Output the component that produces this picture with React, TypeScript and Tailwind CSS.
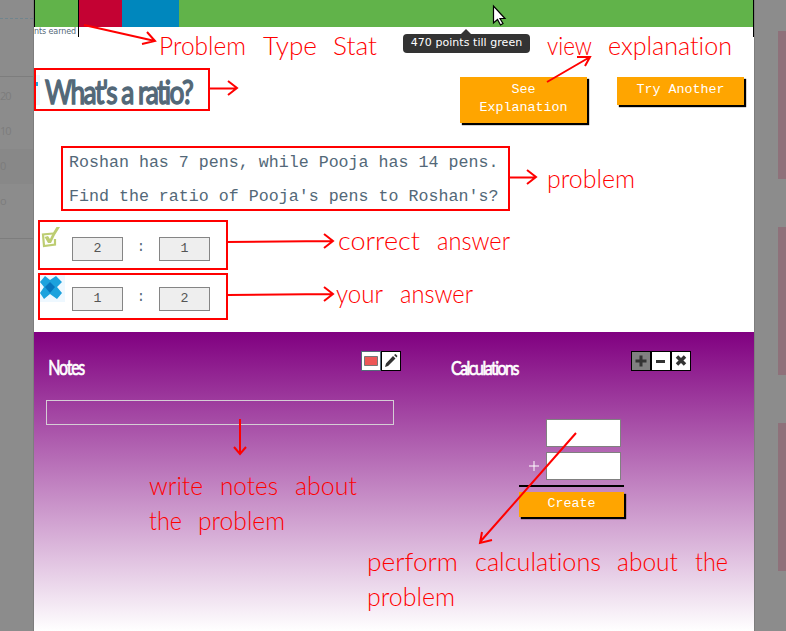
import React from "react";

type Word = [text: string, x: number, width: number];

const notes: { y: number; words: Word[] }[] = [
  { y: 55, words: [["Problem", 159, 87], ["Type", 263, 54], ["Stat", 333, 44]] },
  { y: 55, words: [["view", 547, 45], ["explanation", 608, 124]] },
  { y: 188, words: [["problem", 547, 88]] },
  { y: 250, words: [["correct", 338, 82], ["answer", 437, 73]] },
  { y: 303, words: [["your", 336, 47], ["answer", 400, 73]] },
  { y: 495, words: [["write", 149, 54], ["notes", 220, 58], ["about", 295, 62]] },
  { y: 530, words: [["the", 149, 33], ["problem", 198, 87]] },
  { y: 571, words: [["perform", 367, 91], ["calculations", 475, 126], ["about", 617, 61], ["the", 695, 33]] },
  { y: 606, words: [["problem", 367, 88]] },
];

const arrows = [
  "M84 25 L155 41 M147 32 L155 41 L142 44",
  "M210 88.500 H236 M228 81 L237 88 L228 95",
  "M547 82 L590 57 M577 57 H590 L585 66",
  "M510 177.500 H535 M527 170 L536 177 L527 184",
  "M226 242 L332 241 M324 234 L333 241 L324 248",
  "M228 295 L332 294 M324 287 L333 294 L324 301",
  "M240 419 V454 M234 447 L240 454 L246 447",
  "M576 433 L480 542 M482 532 L480 543 L492 540",
];

function Annotations() {
  return (
    <svg className="pointer-events-none absolute inset-0 [font-variant-ligatures:none]" width="786" height="631" fill="none">
      {arrows.map((d) => (
        <path key={d} d={d} stroke="#ff0000" strokeWidth="2" />
      ))}
      {notes.map(({ y, words }) => (
        <text key={`${words[0][0]}-${y}`} y={y} fill="#ff0000" fontSize="25" fontWeight="300" fontFamily="Lato, 'Open Sans', sans-serif">
          {words.map(([text, x, width]) => (
            <tspan key={text} x={x} textLength={width} lengthAdjust="spacingAndGlyphs">
              {text}
            </tspan>
          ))}
        </text>
      ))}
      <path d="M493.500 6 V23 L497.500 19.500 L500.500 25 L503 23.500 L500 18.500 H505 Z" fill="#fff" stroke="#000" strokeWidth="1.200" />
    </svg>
  );
}

function Answer({ left, right }: { left: string; right: string }) {
  const field =
    "flex h-6 w-[51px] items-center justify-center border border-[#858585] bg-[#eee] text-[13.300px] text-[#555]";
  return (
    <div className="flex font-['Liberation_Mono',monospace]">
      <div className={field}>{left}</div>
      <div className="w-9 pt-0.5 text-center text-[14px] leading-4 text-[#536878]">:</div>
      <div className={field}>{right}</div>
    </div>
  );
}

function CheckIcon() {
  return (
    <svg width="21" height="22" viewBox="0 0 21 22" fill="none" className="shrink-0">
      <path d="M12 6.500 L2 7.500 L3 19 L14 17.500 V12" stroke="#bdcd72" strokeWidth="2.200" />
      <path d="M3.500 10 L7 9 L9 12 Q12 5 15.500 0 H19 Q14 7 10 16 L7 16 Z" fill="#bdcd72" />
    </svg>
  );
}

function CrossIcon() {
  return (
    <svg width="25" height="27" viewBox="0 0 25 27" className="shrink-0">
      <path d="M0 0 H25 V27 H0 Z" fill="#eef8ff" />
      <path d="M0 7 L5 1 L10 5 L16 1 L22 7 L17 12 L22 18 L17 24 L10 19 L4 24 L0 18 L4 12 Z" fill="#1ca2dd" />
      <path d="M10 7 L15 12 L10 18 L5 12 Z" fill="#0875bd" />
    </svg>
  );
}

function Tool({ children, tone = "bg-white border-black" }: { children: React.ReactNode; tone?: string }) {
  return (
    <div className={`flex size-5 items-center justify-center border ${tone}`}>
      <svg width="18" height="18" viewBox="0 0 18 18">{children}</svg>
    </div>
  );
}

const buttonStyle =
  "bg-[#ffa500] text-center font-['Liberation_Mono',monospace] text-[13.330px] leading-[18px] text-white shadow-[2px_2px_1px_#000]";

export default function App() {
  return (
    <div className="relative flex h-[631px] w-[786px] overflow-hidden bg-[#8c8c8c] font-['Open_Sans',sans-serif]">
      <aside className="flex w-[34px] shrink-0 flex-col border-r border-[#7d7d7d] text-[11px] tracking-[-1px] text-[#7c7c7c]">
        <div className="h-[19px] border-b border-dashed border-[#70858e]" />
        <div className="h-[58px] border-b border-[#7d7d7d]" />
        <div className="h-[35px] pt-[11px] leading-4">20</div>
        <div className="h-[37px] pt-[11px] leading-4">10</div>
        <div className="h-[35px] bg-[#888] pt-[9px] leading-4">0</div>
        <div className="h-[55px] border-b border-[#7d7d7d] pt-[9px] leading-4">o</div>
      </aside>

      <main className="flex w-[720px] shrink-0 flex-col bg-white">
        <header className="flex h-[27px] items-start">
          <div className="h-[27px] w-px bg-black" />
          <div className="h-[27px] w-[43px] bg-[#61b34a]" />
          <div className="h-[37px] w-px bg-black" />
          <div className="h-[27px] w-[43px] bg-[#c40233]" />
          <div className="h-[27px] w-[57px] bg-[#0087bd]" />
          <div className="h-[27px] flex-1 bg-[#61b34a]" />
          <div className="h-[37px] w-px bg-black" />
        </header>
        <div className="flex h-[41px] w-11 justify-end pr-[2px]">
          <span className="shrink-0 font-['DejaVu_Sans',sans-serif] text-[8px] leading-[9px] tracking-[-0.100px] text-[#536878]">nts earned</span>
        </div>

        <section className="flex h-[78px] items-start">
          <div className="flex h-[43px] w-44 shrink-0 items-center border-2 border-[#ff0000]">
            <div className="flex h-[30px] w-1 items-center bg-[#eef8ff]">
              <div className="mb-3 h-1 w-[2px] bg-[#1ca2dd]" />
            </div>
            <h1 className="mt-1 ml-[5px] w-[150px] origin-left scale-x-[0.820] font-[Lato,sans-serif] text-[32px] leading-none tracking-[-1.900px] whitespace-nowrap text-[#536878] [-webkit-text-stroke:1.500px_#536878]">
              What's a ratio?
            </h1>
          </div>
          <div className={`${buttonStyle} mt-[9px] ml-[250px] h-[46px] w-[127px] shrink-0 pt-1`}>
            See
            <br />
            Explanation
          </div>
          <div className={`${buttonStyle} mt-[9px] ml-[30px] h-7 w-[127px] shrink-0 pt-1`}>Try Another</div>
        </section>

        <section className="ml-[27px] h-[65px] w-[449px] border-2 border-[#ff0000] pl-1.5 font-['Liberation_Mono',monospace] text-[16.650px] leading-[34px] whitespace-nowrap text-[#536878]">
          <p className="-mt-[2px]">Roshan has 7 pens, while Pooja has 14 pens.</p>
          <p>Find the ratio of Pooja's pens to Roshan's?</p>
        </section>

        <section className="mt-[9px] ml-1 flex h-[112px] flex-col gap-[3px]">
          <div className="flex h-[50px] w-[190px] border-2 border-[#ff0000]">
            <div className="w-8 pt-[5px] pl-px"><CheckIcon /></div>
            <div className="pt-[15px]"><Answer left="2" right="1" /></div>
          </div>
          <div className="flex h-[47px] w-[190px] border-2 border-[#ff0000]">
            <div className="w-8"><CrossIcon /></div>
            <div className="pt-3"><Answer left="1" right="2" /></div>
          </div>
        </section>

        <section className="flex flex-1 bg-linear-to-b/srgb from-[#800080] to-white pt-[19px]">
          <div className="w-[401px] pl-3">
            <div className="flex h-[49px] w-[355px] justify-between">
              <h2 className="w-9 origin-left scale-x-[0.760] pt-1 pl-[3px] font-[Lato,sans-serif] text-[21px] leading-6 tracking-[-1.600px] text-white [-webkit-text-stroke:0.700px_white]">Notes</h2>
              <div className="flex">
                <Tool tone="bg-white border-[#536878]"><path d="M2.500 4.500 h13 v9 h-13 Z" fill="#ed5757" stroke="#777" /></Tool>
                <Tool><path d="M3 15 L4 11.500 L11 4 L13.500 6.500 L6 14 Z M12 3 L13.500 2 L15.500 4 L14.500 5.500 Z" fill="#333" /></Tool>
              </div>
            </div>
            <div className="h-[25px] w-[348px] border border-[#d5cdd5]" />
          </div>
          <div className="flex-1 pl-4">
            <div className="flex h-[67px] w-[240px] justify-between">
              <h2 className="w-[70px] origin-left scale-x-[0.800] pt-1 font-[Lato,sans-serif] text-[20px] leading-6 tracking-[-1.900px] text-white [-webkit-text-stroke:0.700px_white]">Calculations</h2>
              <div className="flex">
                <Tool tone="bg-[#808080] border-black"><path d="M9 3.500 v11 M3.500 9 h11" stroke="#333" strokeWidth="3" /></Tool>
                <Tool><path d="M4 9.500 h9" stroke="#333" strokeWidth="3" /></Tool>
                <Tool><path d="M5 4.500 L13 12.500 M13 4.500 L5 12.500" stroke="#333" strokeWidth="3.500" /></Tool>
              </div>
            </div>
            <div className="ml-[68px] flex w-[105px] flex-col items-end">
              <div className="mt-px mr-[3px] h-7 w-[75px] border border-[#808080] bg-white" />
              <div className="mt-[5px] mr-[3px] flex items-center gap-[7px]">
                <svg width="10" height="10"><path d="M5 0 V10 M0 5 H10" stroke="white" /></svg>
                <div className="h-7 w-[75px] border border-[#808080] bg-white" />
              </div>
              <div className="mt-[5px] h-0.5 w-[105px] bg-black" />
              <div className={`${buttonStyle} mt-[5px] h-[25px] w-[105px] pt-[3px]`}>Create</div>
            </div>
          </div>
        </section>
      </main>

      <aside className="flex flex-1 flex-col items-end gap-12 border-l border-[#7d7d7d] pt-[31px]">
        <div className="h-[148px] w-2 bg-[#8e717a]" />
        <div className="h-[148px] w-2 bg-[#8e717a]" />
        <div className="h-[148px] w-2 bg-[#8e717a]" />
      </aside>

      <div className="absolute top-[34px] left-[403px] flex h-[19px] w-[127px] items-center justify-center rounded bg-[#333] font-['DejaVu_Sans',sans-serif] text-[11px] tracking-[0.050px] whitespace-nowrap text-white">
        470 points till green
        <svg className="absolute -top-[5px] left-[58px]" width="10" height="5"><path d="M0 5 L5 0 L10 5 Z" fill="#333" /></svg>
      </div>
      <Annotations />
    </div>
  );
}
